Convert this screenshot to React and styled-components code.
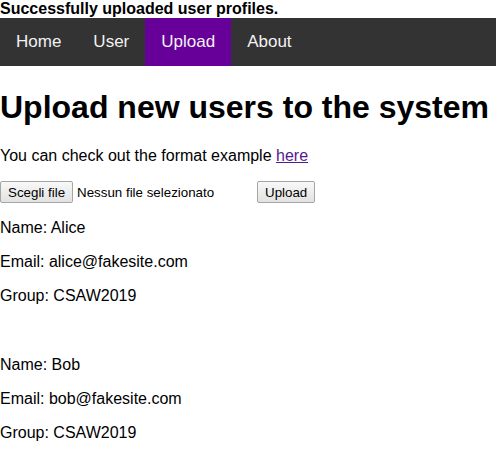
import React from "react";
import styled, { createGlobalStyle } from "styled-components";

const Global = createGlobalStyle`
  html, body { margin: 0; padding: 0; background: #fff; }
  body { font-family: "Liberation Sans", Arial, sans-serif; font-size: 16px; color: #000; }
`;

const Notice = styled.div`
  font-weight: bold;
  font-size: 16px;
  line-height: 18px;
`;

const Nav = styled.nav`
  display: flex;
  background: #333;
`;

const NavLink = styled.a`
  display: block;
  padding: 14px 16px;
  font-size: 17px;
  line-height: 20px;
  color: #f2f2f2;
  text-decoration: none;
  background: ${(p) => (p.$active ? "#660099" : "transparent")};
`;

const Title = styled.h1`
  font-size: 32px;
  font-weight: bold;
  margin: 22px 0 21px;
  line-height: 38px;
`;

const Para = styled.p`
  margin: 16px 0;
  line-height: 18px;
`;

const Link = styled.a`
  color: #551a8b;
  text-decoration: underline;
`;

const Form = styled.form`
  display: flex;
  align-items: center;
  margin: 0;
  font-size: 13.33px;
`;

const FilePicker = styled.div`
  display: flex;
  align-items: center;
  width: 253px;
  gap: 4px;
`;

const Btn = styled.span`
  display: inline-flex;
  align-items: center;
  box-sizing: border-box;
  height: 22px;
  padding: 0 7px;
  border: 1px solid #a6a6a6;
  border-radius: 2px;
  background: linear-gradient(#f8f8f8, #e2e2e2);
  font-size: 13.33px;
  color: #000;
  margin-left: ${(p) => p.$ml || "0"};
`;

const FileText = styled.span`
  font-size: 13.33px;
`;

const Spacer = styled.div`
  height: 19px;
`;

const users = [
  { name: "Alice", email: "alice@fakesite.com", group: "CSAW2019" },
  { name: "Bob", email: "bob@fakesite.com", group: "CSAW2019" },
];

export default function App() {
  return (
    <>
      <Global />
      <Notice>Successfully uploaded user profiles.</Notice>
      <Nav>
        <NavLink>Home</NavLink>
        <NavLink>User</NavLink>
        <NavLink $active>Upload</NavLink>
        <NavLink>About</NavLink>
      </Nav>
      <Title>Upload new users to the system</Title>
      <Para>
        You can check out the format example <Link href="#">here</Link>
      </Para>
      <Form>
        <FilePicker>
          <Btn>Scegli file</Btn>
          <FileText>Nessun file selezionato</FileText>
        </FilePicker>
        <Btn $ml="4px">Upload</Btn>
      </Form>
      {users.map((u, i) => (
        <React.Fragment key={u.name}>
          {i > 0 && <Spacer />}
          <Para>Name: {u.name}</Para>
          <Para>Email: {u.email}</Para>
          <Para>Group: {u.group}</Para>
        </React.Fragment>
      ))}
    </>
  );
}
